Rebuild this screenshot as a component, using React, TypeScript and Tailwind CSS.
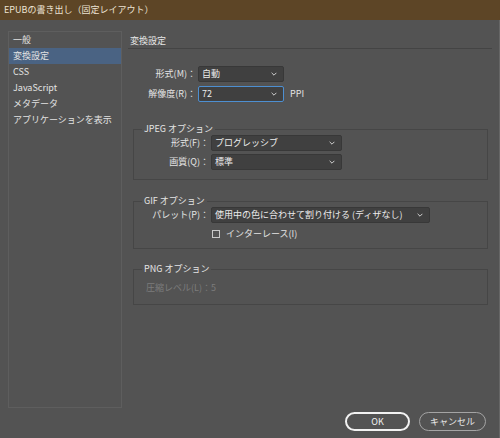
import type { ReactNode } from 'react';

const FONT = { fontFamily: '"Noto Sans CJK JP", "Noto Sans", sans-serif' };

function Chevron() {
    return (
        <svg width="6" height="4" viewBox="0 0 6 4" className="shrink-0">
            <path d="M0.6 0.8 L3 3.2 L5.4 0.8" fill="none" stroke="#cfcfcf" strokeWidth="1" />
        </svg>
    );
}

function Select({ value, width, focused = false }: { value: string; width: string; focused?: boolean }) {
    return (
        <div
            className={`${width} h-[16px] flex items-center justify-between pl-[3px] pr-[6px] rounded-[2px] bg-[#404040] border ${
                focused ? 'border-[#4d8fd1]' : 'border-[#383838]'
            }`}
        >
            <span className="text-[#ececec] leading-[14px]">{value}</span>
            <Chevron />
        </div>
    );
}

function Row({ label, labelWidth, children }: { label: string; labelWidth: string; children: ReactNode }) {
    return (
        <div className="flex items-center gap-[2px] h-[16px]">
            <div className={`${labelWidth} text-right text-[#e4e4e4] leading-[14px]`}>{label}</div>
            {children}
        </div>
    );
}

function Group({ title, className, children }: { title: string; className: string; children: ReactNode }) {
    return (
        <fieldset className={`ml-[5px] mr-[4px] border border-[#464646] p-0 ${className}`}>
            <legend className="ml-[8px] px-[2px] leading-[12px] text-[#e4e4e4]">{title}</legend>
            {children}
        </fieldset>
    );
}

const navItems = ['一般', '変換設定', 'CSS', 'JavaScript', 'メタデータ', 'アプリケーションを表示'];

export default function App() {
    return (
        <div className="w-[500px] h-[438px] bg-[#535353] text-[9px] overflow-hidden select-none" style={FONT}>
            {/* title bar */}
            <div className="h-[20px] bg-[#5d4526] flex items-center pl-[4px] text-[#ece3d4] leading-[12px]">
                EPUBの書き出し（固定レイアウト）
            </div>

            <div className="h-[418px] border-r border-[#666] flex flex-col">
                <div className="flex h-[389px]">
                    {/* category list */}
                    <div className="ml-[8px] mt-[11px] w-[114px] h-[377px] border border-[#5e5e5e]">
                        {navItems.map((item, i) => (
                            <div
                                key={item}
                                className={`h-[16px] leading-[16px] pl-[4px] text-[#e2e2e2] ${i === 1 ? 'bg-[#4a6383]' : ''}`}
                            >
                                {item}
                            </div>
                        ))}
                    </div>

                    {/* settings panel */}
                    <div className="ml-[6px] w-[364px] flex flex-col">
                        <div className="pt-[14px] pb-[1px] pl-[2px] leading-[13px] text-[#e6e6e6] border-b border-[#444]">
                            変換設定
                        </div>

                        <div className="mt-[17px] flex flex-col gap-[4px]">
                            <Row label="形式(M)：" labelWidth="w-[68px]">
                                <Select value="自動" width="w-[86px]" />
                            </Row>
                            <Row label="解像度(R)：" labelWidth="w-[68px]">
                                <Select value="72" width="w-[86px]" focused />
                                <span className="ml-[4px] text-[#e4e4e4]">PPI</span>
                            </Row>
                        </div>

                        <Group title="JPEG オプション" className="mt-[21px] pb-[9px]">
                            <div className="flex flex-col gap-[3px]">
                                <Row label="形式(F)：" labelWidth="w-[75px]">
                                    <Select value="プログレッシブ" width="w-[131px]" />
                                </Row>
                                <Row label="画質(Q)：" labelWidth="w-[75px]">
                                    <Select value="標準" width="w-[131px]" />
                                </Row>
                            </div>
                        </Group>

                        <Group title="GIF オプション" className="mt-[15px] pb-[7px]">
                            <Row label="パレット(P)：" labelWidth="w-[75px]">
                                <Select value="使用中の色に合わせて割り付ける (ディザなし)" width="w-[219px]" />
                            </Row>
                            <div className="mt-[4px] h-[14px] flex items-center pl-[78px]">
                                <div className="w-[8px] h-[8px] border border-[#c9c9c9]" />
                                <span className="ml-[6px] text-[#e4e4e4]">インターレース(I)</span>
                            </div>
                        </Group>

                        <Group title="PNG オプション" className="mt-[14px] pb-[9px]">
                            <div className="mt-[6px] h-[14px] flex items-center pl-[12px] text-[#7c7c7c]">
                                圧縮レベル(L)：5
                            </div>
                        </Group>
                    </div>
                </div>

                {/* buttons */}
                <div className="mt-[3px] flex justify-end gap-[9px] pr-[13px]">
                    <button className="w-[65px] h-[19px] rounded-full border-2 border-[#f2f2f2] text-[#f0f0f0] leading-[14px]">
                        OK
                    </button>
                    <button className="w-[67px] h-[19px] rounded-full border-[1.5px] border-[#a4a4a4] text-[#e8e8e8] leading-[14px]">
                        キャンセル
                    </button>
                </div>
            </div>
        </div>
    );
}
